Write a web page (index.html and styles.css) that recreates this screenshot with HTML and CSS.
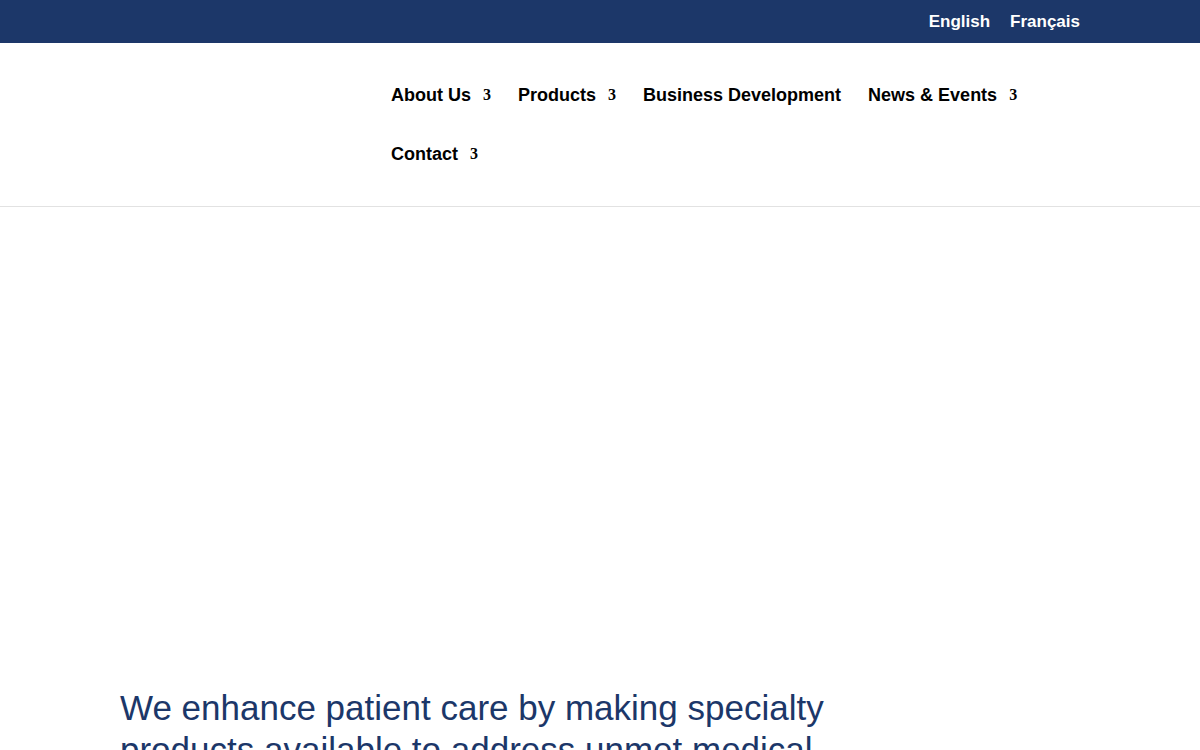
FILE: index.html
```html
<!DOCTYPE html>
<html lang="en">
<head>
<meta charset="utf-8">
<title>Home</title>
<link rel="stylesheet" href="styles.css">
</head>
<body>
<div class="topbar">
  <div class="container topbar-inner">
    <a class="lang" href="#">English</a>
    <a class="lang" href="#">Français</a>
  </div>
</div>
<header class="header">
  <div class="container header-inner">
    <div class="logo"></div>
    <nav class="nav">
      <a class="nav-item has-sub" href="#">About Us<span class="arrow">3</span></a>
      <a class="nav-item has-sub" href="#">Products<span class="arrow">3</span></a>
      <a class="nav-item" href="#">Business Development</a>
      <a class="nav-item has-sub" href="#">News &amp; Events<span class="arrow">3</span></a>
      <a class="nav-item has-sub" href="#">Contact<span class="arrow">3</span></a>
    </nav>
  </div>
</header>
<section class="hero">
  <div class="container">
    <h1 class="hero-title">We enhance patient care by making specialty products available to address unmet medical needs.</h1>
  </div>
</section>
</body>
</html>
```
FILE: styles.css
```css
* { box-sizing: border-box; }
html, body { margin: 0; padding: 0; }
body {
  font-family: "Liberation Sans", Arial, sans-serif;
  background: #ffffff;
  color: #000;
  overflow: hidden;
}
a { text-decoration: none; color: inherit; }
.container { width: 960px; margin: 0 auto; }

.topbar { background: #1c3769; height: 43px; }
.topbar-inner {
  display: flex;
  justify-content: flex-end;
  align-items: center;
  gap: 20px;
  height: 43px;
}
.lang { color: #ffffff; font-weight: bold; font-size: 17px; line-height: 20px; }

.header { border-bottom: 1px solid #e2e2e2; }
.header-inner { display: grid; grid-template-columns: 271px 1fr; }
.nav {
  display: flex;
  flex-wrap: wrap;
  column-gap: 27px;
  row-gap: 35px;
  padding: 40px 0 40px;
}
.nav-item {
  position: relative;
  font-weight: bold;
  font-size: 18px;
  line-height: 24px;
  color: #000;
}
.nav-item.has-sub { padding-right: 20px; }
.arrow {
  position: absolute;
  right: 0;
  top: 0;
  font-family: "Liberation Serif", "Times New Roman", serif;
  font-weight: bold;
  font-size: 16px;
  line-height: 24px;
}

.hero { padding-top: 480px; }
.hero-title {
  margin: 0;
  width: 760px;
  font-weight: normal;
  font-size: 35px;
  line-height: 42px;
  color: #1c3769;
}
```
